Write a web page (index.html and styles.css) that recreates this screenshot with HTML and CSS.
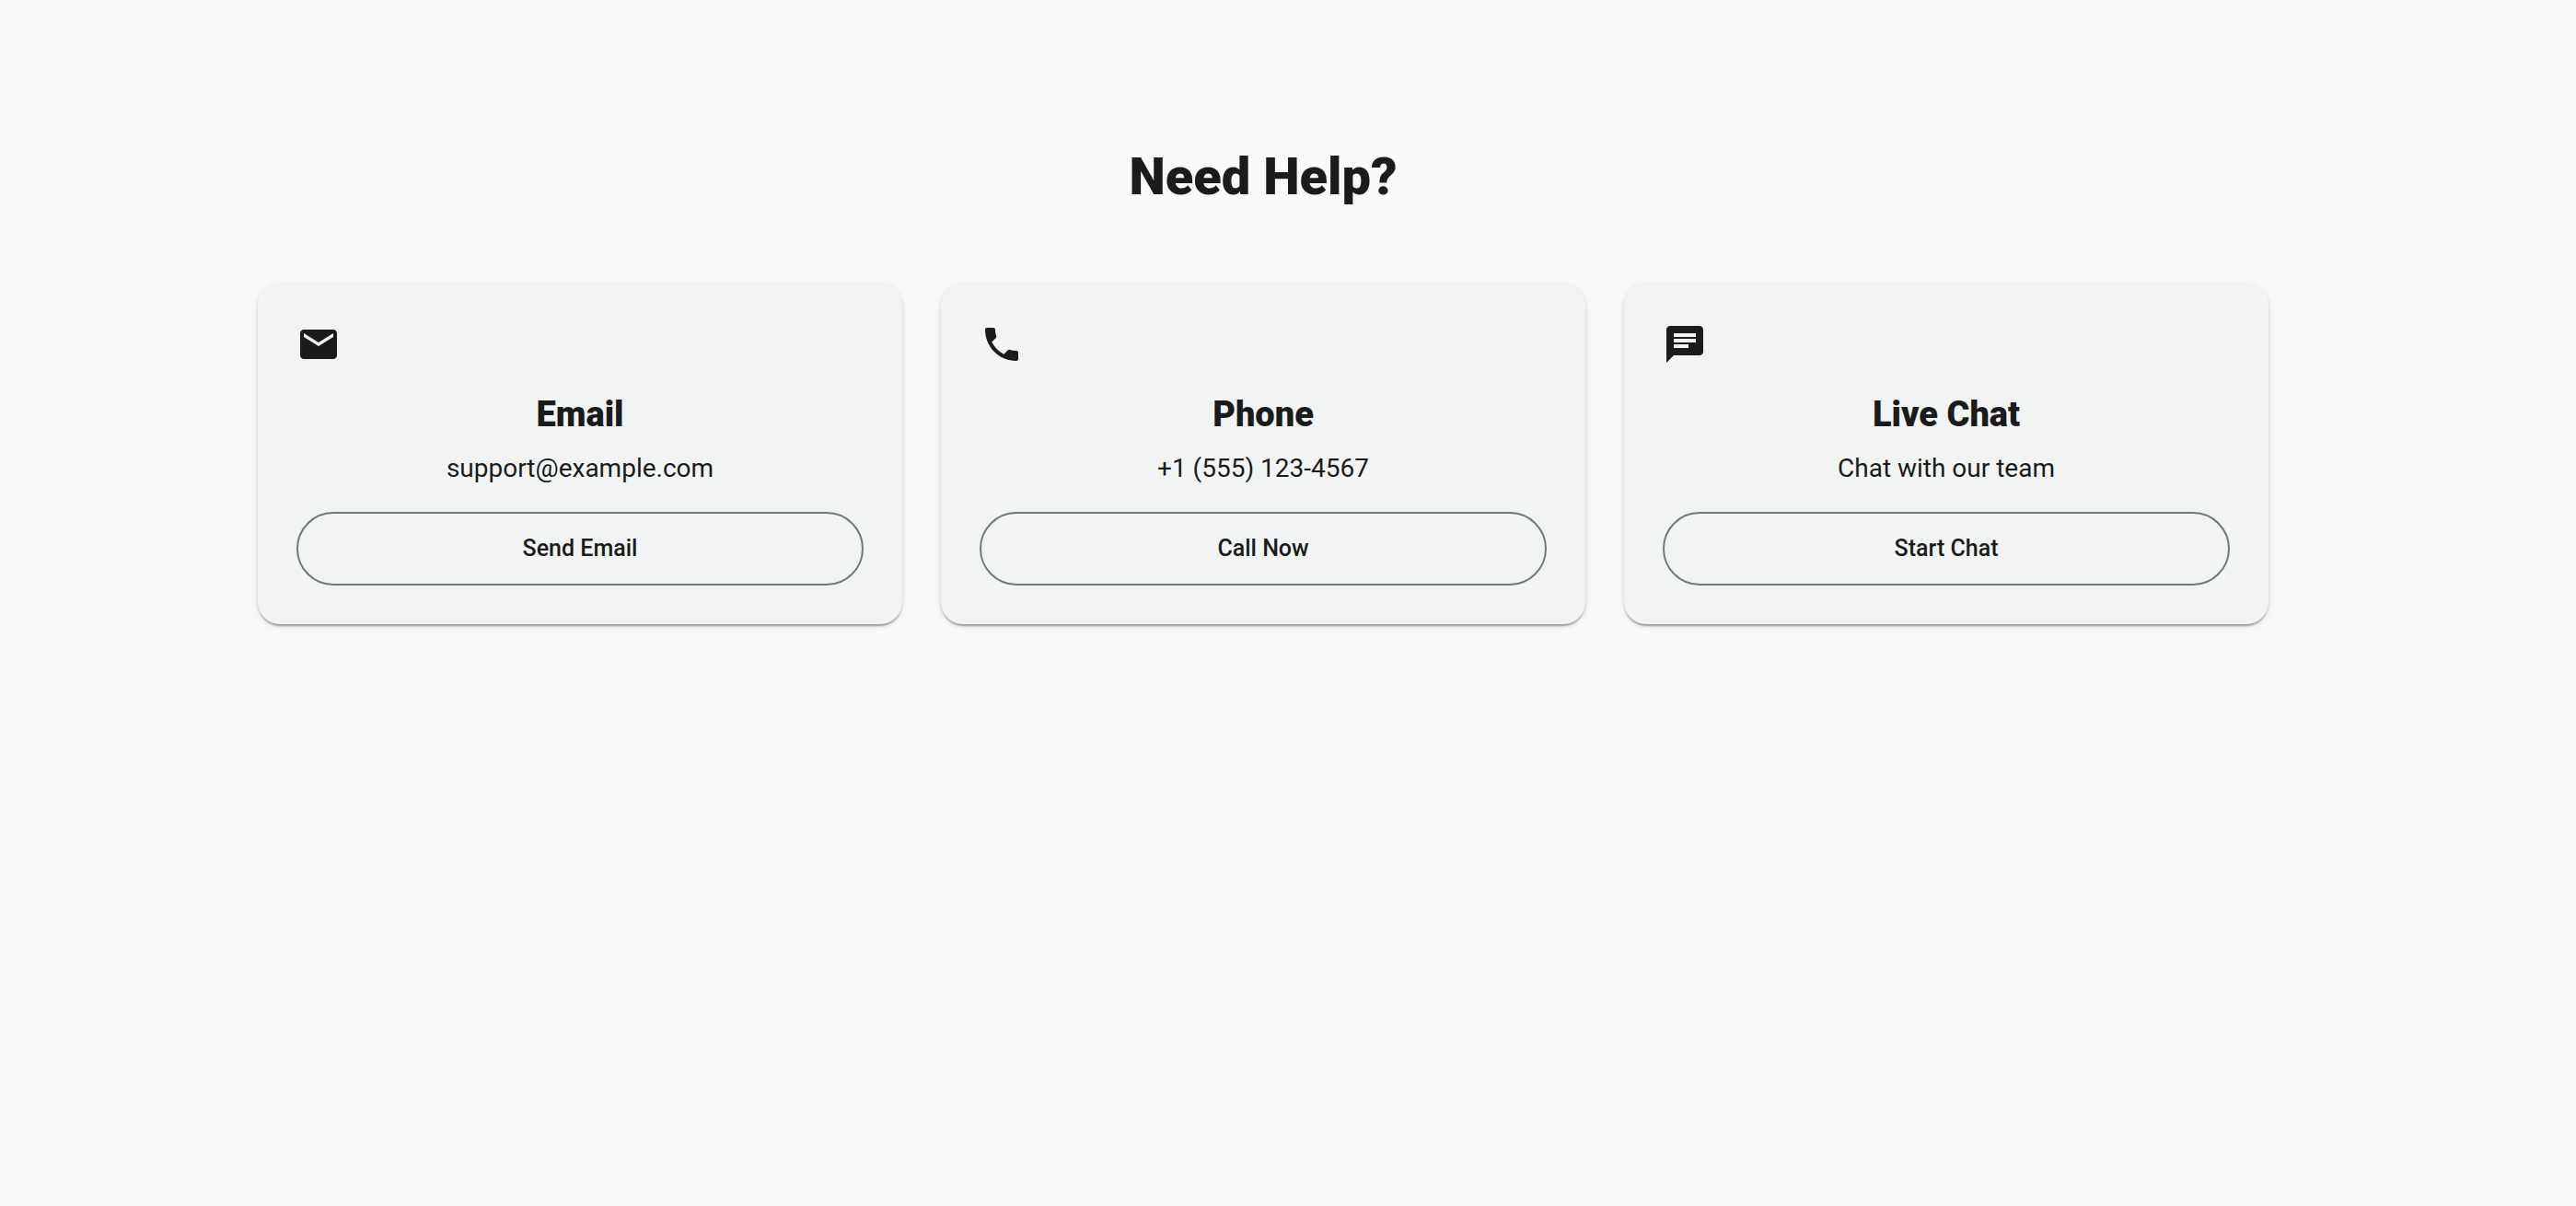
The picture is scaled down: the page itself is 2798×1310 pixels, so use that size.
FILE: index.html
```html
<!DOCTYPE html>
<html lang="en">
<head>
<meta charset="utf-8">
<title>Need Help?</title>
<link rel="stylesheet" href="styles.css">
</head>
<body>
<main class="help">
  <h1 class="help-title">Need Help?</h1>
  <div class="cards">
    <section class="card">
      <svg class="icon" viewBox="0 0 24 24" aria-hidden="true"><path d="M20 4H4c-1.100 0-1.990.9-1.990 2L2 18c0 1.100.9 2 2 2h16c1.100 0 2-.9 2-2V6c0-1.100-.9-2-2-2zm0 4l-8 5-8-5V6l8 5 8-5v2z"/></svg>
      <h2 class="card-title">Email</h2>
      <p class="card-text">support@example.com</p>
      <button class="btn" type="button">Send Email</button>
    </section>
    <section class="card">
      <svg class="icon" viewBox="0 0 24 24" aria-hidden="true"><path d="M6.620 10.790c1.440 2.830 3.760 5.140 6.590 6.590l2.200-2.200c.27-.27.67-.36 1.020-.24 1.120.37 2.330.57 3.570.57.55 0 1 .45 1 1V20c0 .55-.45 1-1 1-9.390 0-17-7.610-17-17 0-.55.45-1 1-1h3.500c.55 0 1 .45 1 1 0 1.250.2 2.450.57 3.570.11.35.03.74-.25 1.020l-2.200 2.200z"/></svg>
      <h2 class="card-title">Phone</h2>
      <p class="card-text">+1 (555) 123-4567</p>
      <button class="btn" type="button">Call Now</button>
    </section>
    <section class="card">
      <svg class="icon" viewBox="0 0 24 24" aria-hidden="true"><path d="M20 2H4c-1.100 0-1.990.9-1.990 2L2 22l4-4h14c1.100 0 2-.9 2-2V4c0-1.100-.9-2-2-2zM6 9h12v2H6V9zm8 5H6v-2h8v2zm4-6H6V6h12v2z"/></svg>
      <h2 class="card-title">Live Chat</h2>
      <p class="card-text">Chat with our team</p>
      <button class="btn" type="button">Start Chat</button>
    </section>
  </div>
</main>
</body>
</html>
```
FILE: styles.css
```css
* { box-sizing: border-box; }
body {
  margin: 0;
  background: #f8faf9;
  color: #191c1b;
  font-family: Roboto, sans-serif;
}
.help {
  padding: 156px 334px 64px 280px;
}
.help-title {
  margin: 0 0 80px;
  font-size: 56px;
  line-height: 72px;
  font-weight: 900;
  text-align: center;
}
.cards {
  display: grid;
  grid-template-columns: repeat(3, 1fr);
  gap: 42px;
}
.card {
  display: flex;
  flex-direction: column;
  padding: 42px;
  border-radius: 24px;
  background: #f2f4f3;
  box-shadow: 0 4px 2px -2px rgba(0, 0, 0, 0.2), 0 2px 2px rgba(0, 0, 0, 0.14), 0 2px 6px rgba(0, 0, 0, 0.12);
}
.icon {
  width: 48px;
  height: 48px;
  fill: currentColor;
}
.card-title {
  margin: 28px 0 14px;
  font-size: 38px;
  line-height: 48px;
  font-weight: 900;
  text-align: center;
}
.card-text {
  margin: 0 0 26px;
  font-size: 28px;
  line-height: 42px;
  text-align: center;
}
.btn {
  height: 80px;
  border: 2px solid #6f7978;
  border-radius: 40px;
  background: transparent;
  color: inherit;
  font: 500 25px/36px Roboto, sans-serif;
}
```
